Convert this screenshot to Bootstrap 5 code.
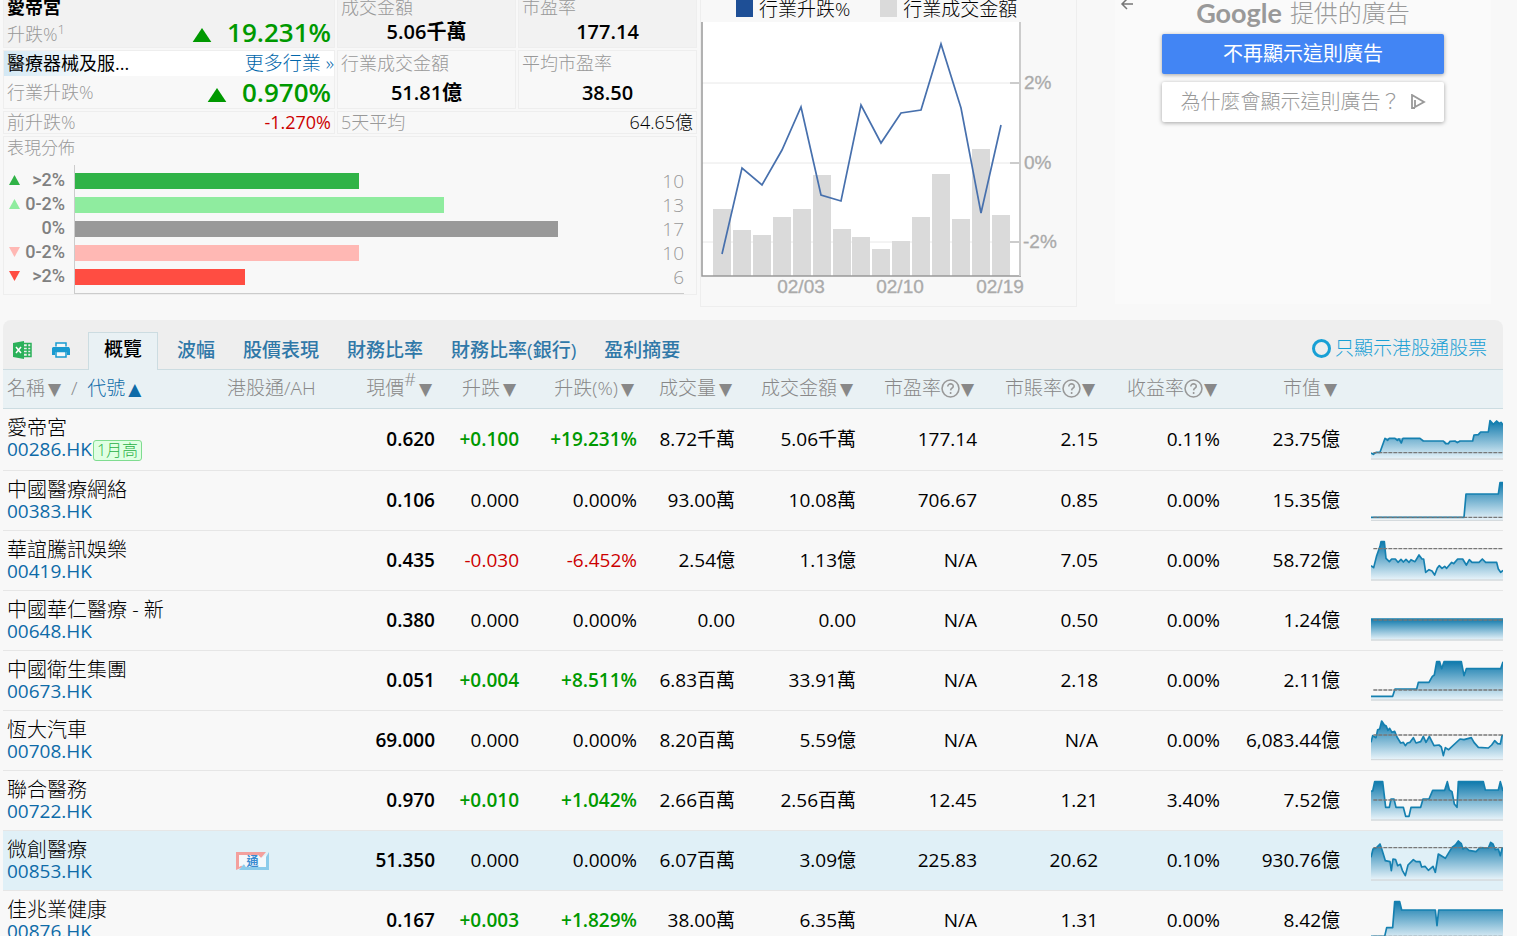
<!DOCTYPE html>
<html lang="zh-Hant">
<head>
<meta charset="utf-8">
<meta name="viewport" content="width=device-width, initial-scale=1">
<title>醫療器械及服務 - 行業</title>
<link href="https://cdn.jsdelivr.net/npm/bootstrap@5.3.0/dist/css/bootstrap.min.css" rel="stylesheet">
<style>
body{background:#f8f8f8;color:#000;font-family:"Open Sans","Noto Sans CJK TC",sans-serif;font-size:18px;line-height:24px;font-weight:300;overflow-x:hidden}
html{scrollbar-width:none}
html::-webkit-scrollbar{display:none}
a{text-decoration:none;color:#06a}
.page{padding:0 14px 0 3px}
.overview{display:grid;grid-template-columns:694fr 377fr 32fr 376fr 9fr;column-gap:3px;height:320px;align-items:start}
.quote{display:grid;grid-template-columns:332fr 179fr 179fr;gap:2px}
.cell{border:1px solid #eee;padding:0 3px;color:#999}
.cell.top{background:#f2f2f2;border-top:0;height:48px}
.cell.mid{height:59px}
.cell.slim{line-height:21px}
.wide{grid-column:span 2}
.full{grid-column:1/-1}
.lh-first{line-height:14px}
.big{font-size:26px;font-weight:600;color:#090;line-height:32px}
.top .big{padding-top:2px}
.mv{font-size:20px;font-weight:600;color:#000;text-align:center;padding-top:6px}
.ind{background:linear-gradient(90deg,#d3e8f4,#fff 110px);line-height:25px;margin:0 -3px;padding:0 0 0 3px}
.ind a{font-size:19px}
.neg{color:#c00}
.pos{color:#090}
.disttitle{font-size:17px;line-height:22px;margin-bottom:6px}
.dist{display:grid;grid-template-columns:16px 44px 1fr;color:#999;font-size:19px;margin-right:9px}
.dist .lab{font:500 18px/24px Roboto,sans-serif;color:#808080;text-align:right;padding-right:2px}
.plot{border-left:1px solid #ccc;border-bottom:1px solid #ccc;margin-left:7px;padding:4px 0}
.line{height:24px;display:flex;align-items:center;justify-content:space-between}
.bar{height:16px}
.dist .labs{padding-top:3px}
.tri{margin-left:2px}
.key{width:17px;height:17px;display:inline-block}
.chartbox{border:1px solid #eee;border-top:0;height:307px;font-size:19px}
.chartbox svg{display:block;width:100%}
.legendrow{padding-left:35px;height:22px;gap:6px;line-height:18px}
.adbox{background:#fafafa;height:304px;color:#999}
.adhead{line-height:26px;padding-bottom:8px;font-size:24px}
.logo{font:700 27px/24px "Lato",sans-serif;color:#999}
.adbtn{width:75%;height:40px;border:0;border-radius:2px;box-shadow:0 1px 4px rgba(0,0,0,.35);font-size:20px;line-height:40px;padding:0;font-weight:400;display:block;margin:0 auto 8px}
.adbtn.main{background:#4285f4;color:#fff}
.adbtn.why{background:#fff;color:#999;font-weight:300}
.adbtn svg{vertical-align:-1px;margin-left:4px}
.tabs{background:#eee;border-radius:8px 8px 0 0;height:50px;border-bottom:1px solid #ccdce1}
.tabs .nav-link{padding:0 14px;line-height:26px;color:#3078a8;font-weight:500;font-size:19px;margin-bottom:6px}
.tabs .nav-link.active{background:#e9f1f4;border:1px solid #ccdce1;border-bottom:0;color:#000;height:38px;margin-bottom:-1px;line-height:32px;padding:0 15px;margin-right:5px}
.exports{gap:19px;padding:0 18px 9px 10px}
.exports a{display:flex;align-items:center;height:20px}
.only{color:#19a0d5;font-size:19px;padding:0 16px 9px 0}
.only input{appearance:none;width:19px;height:19px;border:3px solid #19a0d5;border-radius:50%;margin:0 4px 0 0}
.stocks{table-layout:fixed;width:100%;border-collapse:collapse;font-size:19px;line-height:21px}
.stocks th{background:#e9f1f4;color:#888;font-weight:300;height:38px;border-bottom:1px solid #ccdce1;text-align:right;padding:0 6px 0 0;white-space:nowrap}
.stocks th i{font:normal 17px/18px "DejaVu Sans",sans-serif;margin-left:3px}
.stocks th .q+i{margin-left:1px}
.stocks th sup{font-size:18px}
.stocks td{height:60px;border-bottom:1px solid #e6e6e6;text-align:right;padding:0 3px 0 0;white-space:nowrap;font-weight:400}
.stocks td:first-child,.stocks th:first-child{text-align:left;padding-left:4px}
.stocks td:first-child{font-size:20px;font-weight:300}
.stocks td a{font-size:19px;font-weight:400}
.stocks td:nth-child(2),.stocks th:nth-child(2){text-align:left;padding-left:7px}
.stocks td:nth-child(2){padding-left:16px}
.stocks td:nth-child(3){font-weight:600}
.stocks td.pos{font-weight:600}
.stocks td.neg{font-weight:500}
.stocks td:last-child{padding:0}
.stocks .tall td{height:62px}
.stocks .sel td{background:#e0f0f7}
.stocks a{color:#0e6ba8}
.high{font-size:16px;line-height:19px;color:#28b045;background:#e0ffe3;border:1px solid #7fdc90;border-radius:3px;padding:0 3px;margin-left:1px;display:inline-block}
.stocks svg.q{margin-bottom:2px}
.spark{width:132px;height:42px;display:inline-block}
.spark .a{fill:url(#sea);stroke:none}
.spark .l{fill:none;stroke:#1580b0;stroke-width:5;stroke-linejoin:round}
.spark .d{stroke:#777;stroke-width:4;stroke-dasharray:12 3}
.spark .b{stroke:#d5dadd;stroke-width:4}
</style>
</head>
<body>
<svg width="0" height="0" class="position-absolute" aria-hidden="true"><defs>
<linearGradient id="sea" x1="0" y1="0" x2="0" y2="1"><stop offset="0" stop-color="#0f79ac"/><stop offset="1" stop-color="#e9f4fa"/></linearGradient>
<symbol id="help" viewBox="0 0 18 18"><circle cx="9" cy="9" r="8" fill="none" stroke="#999" stroke-width="1.5"/><path d="M6.400 7.200c0-3.600 5.400-3.300 5.200-.2-.1 1.700-2.400 1.800-2.500 3.800M9.100 12.400v1.800" fill="none" stroke="#999" stroke-width="1.5"/></symbol>
</defs></svg>
<main class="page">
<section class="overview">
  <div class="quote">
    <div class="cell top"><div class="fw-bold text-black lh-first">愛帝宮</div>
      <div class="d-flex justify-content-between"><span class="pt-2">升跌%<sup>1</sup></span><span class="big"><svg width="20" height="14" viewBox="0 0 20 15" class="me-2"><path d="M0 15 10 0 20 15z" fill="#090"/></svg> 19.231%</span></div></div>
    <div class="cell top"><div class="lh-first">成交金額</div><div class="mv">5.06千萬</div></div>
    <div class="cell top"><div class="lh-first">市盈率</div><div class="mv">177.14</div></div>
    <div class="cell mid"><div class="ind d-flex justify-content-between"><b class="text-black">醫療器械及服...</b><a href="#">更多行業 »</a></div>
      <div class="d-flex justify-content-between"><span class="pt-1">行業升跌%</span><span class="big"><svg width="20" height="14" viewBox="0 0 20 15" class="me-2"><path d="M0 15 10 0 20 15z" fill="#090"/></svg> 0.970%</span></div></div>
    <div class="cell mid">行業成交金額<div class="mv">51.81億</div></div>
    <div class="cell mid">平均市盈率<div class="mv">38.50</div></div>
    <div class="cell slim d-flex justify-content-between"><span>前升跌%</span><span class="neg fw-normal">-1.270%</span></div>
    <div class="cell slim wide d-flex justify-content-between"><span>5天平均</span><span class="text-black">64.65億</span></div>
    <div class="cell full"><div class="disttitle">表現分佈</div>
      <div class="dist">
        <div class="labs">
          <div class="line"><svg width="12" height="12" class="tri"><path d="M0 11 5.500 1 11 11z" fill="#30b347"/></svg></div>
          <div class="line"><svg width="12" height="12" class="tri"><path d="M0 11 5.500 1 11 11z" fill="#8fec9f"/></svg></div>
          <div class="line"></div>
          <div class="line"><svg width="12" height="12" class="tri"><path d="M0 1 5.500 11 11 1z" fill="#ffb8b4"/></svg></div>
          <div class="line"><svg width="12" height="12" class="tri"><path d="M0 1 5.500 11 11 1z" fill="#ff4d42"/></svg></div>
        </div>
        <div class="lab labs"><div>&gt;2%</div><div>0-2%</div><div>0%</div><div>0-2%</div><div>&gt;2%</div></div>
        <div class="plot">
          <div class="line"><div class="bar" style="width:46.6%;background:#30b347"></div>10</div>
          <div class="line"><div class="bar" style="width:60.6%;background:#8fec9f"></div>13</div>
          <div class="line"><div class="bar" style="width:79.3%;background:#999"></div>17</div>
          <div class="line"><div class="bar" style="width:46.6%;background:#ffb8b4"></div>10</div>
          <div class="line"><div class="bar" style="width:27.9%;background:#ff4d42"></div>6</div>
        </div>
      </div></div>
  </div>
  <div class="chartbox">
    <div class="d-flex legendrow"><span class="key" style="background:#1e4f96"></span>行業升跌%<span class="key ms-4" style="background:#dadada"></span>行業成交金額</div>
    <svg viewBox="0 0 375 284" role="img" aria-label="行業升跌及成交金額">
      <path d="M1 0h319v254H1z" fill="#fff"/>
      <path d="M1 61h319M1 141h319M1 220h319" stroke="#e8e8e8"/>
      <g fill="#dadada"><path d="M12 187h18v67H12zM32 208h18v46H32zM52 213h18v41H52zM72 195h18v59H72zM92 187h18v67H92zM112 153h18v101H112zM132 207h18v47H132zM151 215h18v39H151zM171 227h18v27H171zM191 219h18v35H191zM211 195h18v59H211zM231 152h18v102H231zM251 197h18v57H251zM271 127h18v127H271zM291 193h18v61H291z"/></g>
      <path d="M21 232 41 146 61 163 81 128 100 85 120 173 140 179 160 83 180 121 200 91 220 88 240 22 260 86 280 191 300 103" fill="none" stroke="#4770ad" stroke-width="1.700"/>
      <path d="M1 0v254h319" fill="none" stroke="#999" stroke-width="1.500"/>
      <path d="M319 0v254M309 61h10M309 141h10M309 220h10" stroke="#ccc" stroke-width="2"/>
      <g font-family="Liberation Sans,sans-serif" font-size="19" font-weight="400" fill="#aaa" stroke="#aaa" stroke-width=".3"><text x="323" y="67">2%</text><text x="323" y="147">0%</text><text x="322" y="226">-2%</text><g text-anchor="middle"><text x="100" y="271">02/03</text><text x="199" y="271">02/10</text><text x="299" y="271">02/19</text></g></g>
    </svg>
  </div>
  <div></div>
  <div class="adbox text-center position-relative">
    <button class="btn p-0 border-0 position-absolute start-0 top-0 ms-1 lh-1" aria-label="返回"><svg class="d-block" width="16" height="12" viewBox="0 0 16 12"><path d="M14 4H3M8-1 3 4l5 5" fill="none" stroke="#777" stroke-width="1.500"/></svg></button>
    <div class="d-flex justify-content-center align-items-center gap-2 adhead"><span class="logo">Google</span><span>提供的廣告</span></div>
    <button class="adbtn main">不再顯示這則廣告</button>
    <button class="adbtn why">為什麼會顯示這則廣告？ <svg width="16" height="16" viewBox="0 0 16 16"><path d="M5 14H2V1l12 7-9 5V6" fill="none" stroke="#999" stroke-width="1.800"/></svg></button>
  </div>
</section>

<section>
  <div class="tabs d-flex align-items-end">
    <div class="exports d-flex align-items-center">
    <a href="#" aria-label="Excel"><svg width="20" height="18" viewBox="0 0 20 18"><path d="M0 2 11 0v18L0 16z" fill="#2bb15a"/><path d="m3 6 5 6M8 6l-5 6" stroke="#fff" stroke-width="1.500"/><path d="M11 2.500h7v13h-7M11 6h7M11 9h7M11 12h7M14.500 2v13" fill="none" stroke="#2bb15a" stroke-width="1.500"/></svg></a>
    <a href="#" aria-label="列印"><svg width="18" height="16" viewBox="0 0 18 16"><path d="M1 5h16l1 2v6h-3v-3H3v3H0V6z" fill="#199ad0"/><path d="M4 4.500V1h10v3.500M4 9.500h10V15H4z" fill="#f3f8fa" stroke="#199ad0" stroke-width="1.500"/></svg></a>
    </div>
    <nav class="nav align-items-end flex-grow-1">
      <a class="nav-link active" href="#">概覽</a>
      <a class="nav-link" href="#">波幅</a><a class="nav-link" href="#">股價表現</a><a class="nav-link" href="#">財務比率</a><a class="nav-link" href="#">財務比率(銀行)</a><a class="nav-link" href="#">盈利摘要</a>
    </nav>
    <label class="only d-flex align-items-center"><input type="checkbox">只顯示港股通股票</label>
  </div>
  <table class="stocks">
    <colgroup><col><col style="width:110px"><col style="width:108px"><col style="width:84px"><col style="width:118px"><col style="width:98px"><col style="width:121px"><col style="width:121px"><col style="width:121px"><col style="width:122px"><col style="width:120px"><col style="width:160px"></colgroup>
    <thead><tr><th>名稱<i>▼</i> &nbsp;/ &nbsp;<a href="#">代號<i>▲</i></a></th><th>港股通/AH</th><th>現價<sup>#</sup><i>▼</i></th><th>升跌<i>▼</i></th><th>升跌(%)<i>▼</i></th><th>成交量<i>▼</i></th><th>成交金額<i>▼</i></th><th>市盈率<svg class="q" width="19" height="19"><use href="#help"/></svg><i>▼</i></th><th>市賬率<svg class="q" width="19" height="19"><use href="#help"/></svg><i>▼</i></th><th>收益率<svg class="q" width="19" height="19"><use href="#help"/></svg><i>▼</i></th><th>市值<i>▼</i></th><th></th></tr></thead>
    <tbody>
    <tr class="tall"><td>愛帝宮<br><a href="#">00286.HK</a><span class="high">1月高</span></td><td></td><td>0.620</td><td class="pos">+0.100</td><td class="pos">+19.231%</td><td>8.72千萬</td><td>5.06千萬</td><td>177.14</td><td>2.15</td><td>0.11%</td><td>23.75億</td>
      <td><svg class="spark" viewBox="33 27 396 126"><path class="a" d="M33 132 60 130 75 88 180 88 190 96 255 96 262 104 270 96 338 96 342 78 355 76 362 69 385 69 390 35 400 44 410 36 420 42 429 46V150H33z"/><path class="l" d="M33 132 40 136 48 130 60 130 75 88 83 94 88 88 105 88 112 94 117 90 124 102 129 88 180 88 190 96 250 96 257 104 265 104 270 97 285 96 292 101 300 96 338 96 342 78 355 77 362 69 385 69 390 35 400 46 410 36 418 44 423 40 429 48"/><path class="d" d="M40 131h388"/><path class="b" d="M33 150h396"/></svg></td></tr>
    <tr><td>中國醫療網絡<br><a href="#">00383.HK</a></td><td></td><td>0.106</td><td>0.000</td><td>0.000%</td><td>93.00萬</td><td>10.08萬</td><td>706.67</td><td>0.85</td><td>0.00%</td><td>15.35億</td>
      <td><svg class="spark" viewBox="33 207 396 126"><path class="a" d="M312 322 318 252 415 252 420 218 429 218V330H312z"/><path class="l" d="M33 322H312L318 252H415L420 218H429"/><path class="d" d="M40 322h388"/><path class="b" d="M33 331h396"/></svg></td></tr>
    <tr><td>華誼騰訊娛樂<br><a href="#">00419.HK</a></td><td></td><td>0.435</td><td class="neg">-0.030</td><td class="neg">-6.452%</td><td>2.54億</td><td>1.13億</td><td>N/A</td><td>7.05</td><td>0.00%</td><td>58.72億</td>
      <td><svg class="spark" viewBox="33 390 396 126"><path class="a" d="M33 470 41 476 50 440 60 412 63 398 73 398 78 448 88 458 95 450 106 450 114 460 123 451 130 459 138 451 147 460 153 452 165 458 177 438 186 450 191 450 197 490 207 482 216 486 224 498 232 477 238 470 246 478 254 472 260 478 275 460 281 464 293 450 308 450 319 468 328 452 336 460 357 460 367 450 377 460 410 460 415 480 422 490 429 484V513H33z"/><path class="l" d="M33 470 41 476 50 440 60 412 63 398 73 398 78 448 88 458 95 450 106 450 114 460 123 451 130 459 138 451 147 460 153 452 165 458 177 438 186 450 191 450 197 490 207 482 216 486 224 498 232 477 238 470 246 478 254 472 260 478 275 460 281 464 293 450 308 450 319 468 328 452 336 460 357 460 367 450 377 460 410 460 415 480 422 490 429 484"/><path class="d" d="M40 419h388"/><path class="b" d="M33 513h396"/></svg></td></tr>
    <tr><td>中國華仁醫療 - 新<br><a href="#">00648.HK</a></td><td></td><td>0.380</td><td>0.000</td><td>0.000%</td><td>0.00</td><td>0.00</td><td>N/A</td><td>0.50</td><td>0.00%</td><td>1.24億</td>
      <td><svg class="spark" viewBox="33 570 396 126"><path class="a" d="M33 630 429 631V693H33z"/><path class="l" d="M33 630H429"/><path class="d" d="M40 633h388"/><path class="b" d="M33 693h396"/></svg></td></tr>
    <tr><td>中國衛生集團<br><a href="#">00673.HK</a></td><td></td><td>0.051</td><td class="pos">+0.004</td><td class="pos">+8.511%</td><td>6.83百萬</td><td>33.91萬</td><td>N/A</td><td>2.18</td><td>0.00%</td><td>2.11億</td>
      <td><svg class="spark" viewBox="33 30 396 126"><path class="a" d="M33 142H98L105 120H170L175 100H207L217 82 223 78 230 38H239L245 59 252 38H304L312 80 319 59H422L429 38V153H33z"/><path class="l" d="M33 142H98L105 120H170L175 100H207L217 82 223 78 230 38H239L245 59 252 38H304L312 80 319 59H422L429 38"/><path class="d" d="M40 123h388"/><path class="b" d="M33 153h396"/></svg></td></tr>
    <tr><td>恆大汽車<br><a href="#">00708.HK</a></td><td></td><td>69.000</td><td>0.000</td><td>0.000%</td><td>8.20百萬</td><td>5.59億</td><td>N/A</td><td>N/A</td><td>0.00%</td><td>6,083.44億</td>
      <td><svg class="spark" viewBox="33 210 396 126"><path class="a" d="M33 280 38 260 48 266 53 242 59 240 65 216 73 228 78 230 84 244 89 238 96 250 104 247 111 264 122 282 130 280 136 290 142 282 150 280 160 266 168 282 182 278 190 262 198 280 208 262 222 290 237 288 244 294 250 320 256 296 266 302 300 270 312 272 334 266 342 280 355 295 385 297 395 288 404 275 413 284 421 285 426 260 429 258V332H33z"/><path class="l" d="M33 280 38 260 48 266 53 242 59 240 65 216 73 228 78 230 84 244 89 238 96 250 104 247 111 264 122 282 130 280 136 290 142 282 150 280 160 266 168 282 182 278 190 262 198 280 208 262 222 290 237 288 244 294 250 320 256 296 266 302 300 270 312 272 334 266 342 280 355 295 385 297 395 288 404 275 413 284 421 285 426 260 429 258"/><path class="d" d="M40 258h388"/><path class="b" d="M33 332h396"/></svg></td></tr>
    <tr><td>聯合醫務<br><a href="#">00722.HK</a></td><td></td><td>0.970</td><td class="pos">+0.010</td><td class="pos">+1.042%</td><td>2.66百萬</td><td>2.56百萬</td><td>12.45</td><td>1.21</td><td>3.40%</td><td>7.52億</td>
      <td><svg class="spark" viewBox="33 390 396 126"><path class="a" d="M33 426H38L44 398H68L77 475H88L93 450H102L108 475H130L137 502H147L153 475H182L189 450H207L218 424H254L262 398 268 423 276 428 283 465 291 475 295 398H370L376 423H415L421 398 429 426V513H33z"/><path class="l" d="M33 426H38L44 398H68L77 475H88L93 450H102L108 475H130L137 502H147L153 475H182L189 450H207L218 424H254L262 398 268 423 276 428 283 465 291 475 295 398H370L376 423H415L421 398 429 426"/><path class="d" d="M40 453h388"/><path class="b" d="M33 513h396"/></svg></td></tr>
    <tr class="sel"><td>微創醫療<br><a href="#">00853.HK</a></td><td><svg width="33" height="18" viewBox="0 0 33 18"><path d="M0 0h30l-5 6-3-3H3v9l4 3-7 3z" fill="#f3a09d"/><path d="M33 0v18H3l5-6 2 3h20V5z" fill="#8bcbea"/><path d="M3 3h19l3 3 5-3v12H10l-2-3-5 3z" fill="#f3f8fb"/><text x="16.500" y="14" font-family="Noto Sans CJK TC,sans-serif" font-size="12" font-weight="700" text-anchor="middle" fill="#398bd0">通</text></svg></td><td>51.350</td><td>0.000</td><td>0.000%</td><td>6.07百萬</td><td>3.09億</td><td>225.83</td><td>20.62</td><td>0.10%</td><td>930.76億</td>
      <td><svg class="spark" viewBox="33 570 396 126"><path class="a" d="M33 625 39 600 48 597 60 585 66 602 76 635 90 638 94 665 99 630 107 632 113 650 121 646 127 664 136 680 144 648 160 632 168 638 180 638 185 654 195 652 205 664 219 652 226 670 235 615 256 628 276 595 286 588 295 576 304 584 309 600 317 595 327 604 348 608 360 596 385 597 392 580 399 585 406 602 415 600 421 620 426 598 429 596V693H33z"/><path class="l" d="M33 625 39 600 48 597 60 585 66 602 76 635 90 638 94 665 99 630 107 632 113 650 121 646 127 664 136 680 144 648 160 632 168 638 180 638 185 654 195 652 205 664 219 652 226 670 235 615 256 628 276 595 286 588 295 576 304 584 309 600 317 595 327 604 348 608 360 596 385 597 392 580 399 585 406 602 415 600 421 620 426 598 429 596"/><path class="d" d="M40 596h388"/><path class="b" d="M33 693h396"/></svg></td></tr>
    <tr><td>佳兆業健康<br><a href="#">00876.HK</a></td><td></td><td>0.167</td><td class="pos">+0.003</td><td class="pos">+1.829%</td><td>38.00萬</td><td>6.35萬</td><td>N/A</td><td>1.31</td><td>0.00%</td><td>8.42億</td>
      <td><svg class="spark" viewBox="33 750 396 126"><path class="a" d="M74 860 80 836H98L104 758H119L125 783H226L231 830 236 783H429V873H70z"/><path class="l" d="M33 862H74L80 836H98L104 758H119L125 783H226L231 830 236 783H429"/><path class="d" d="M40 862h388"/><path class="b" d="M33 873h396"/></svg></td></tr>
    </tbody>
  </table>
</section>
</main>
<script src="https://cdn.jsdelivr.net/npm/bootstrap@5.3.0/dist/js/bootstrap.bundle.min.js"></script>
</body>
</html>
